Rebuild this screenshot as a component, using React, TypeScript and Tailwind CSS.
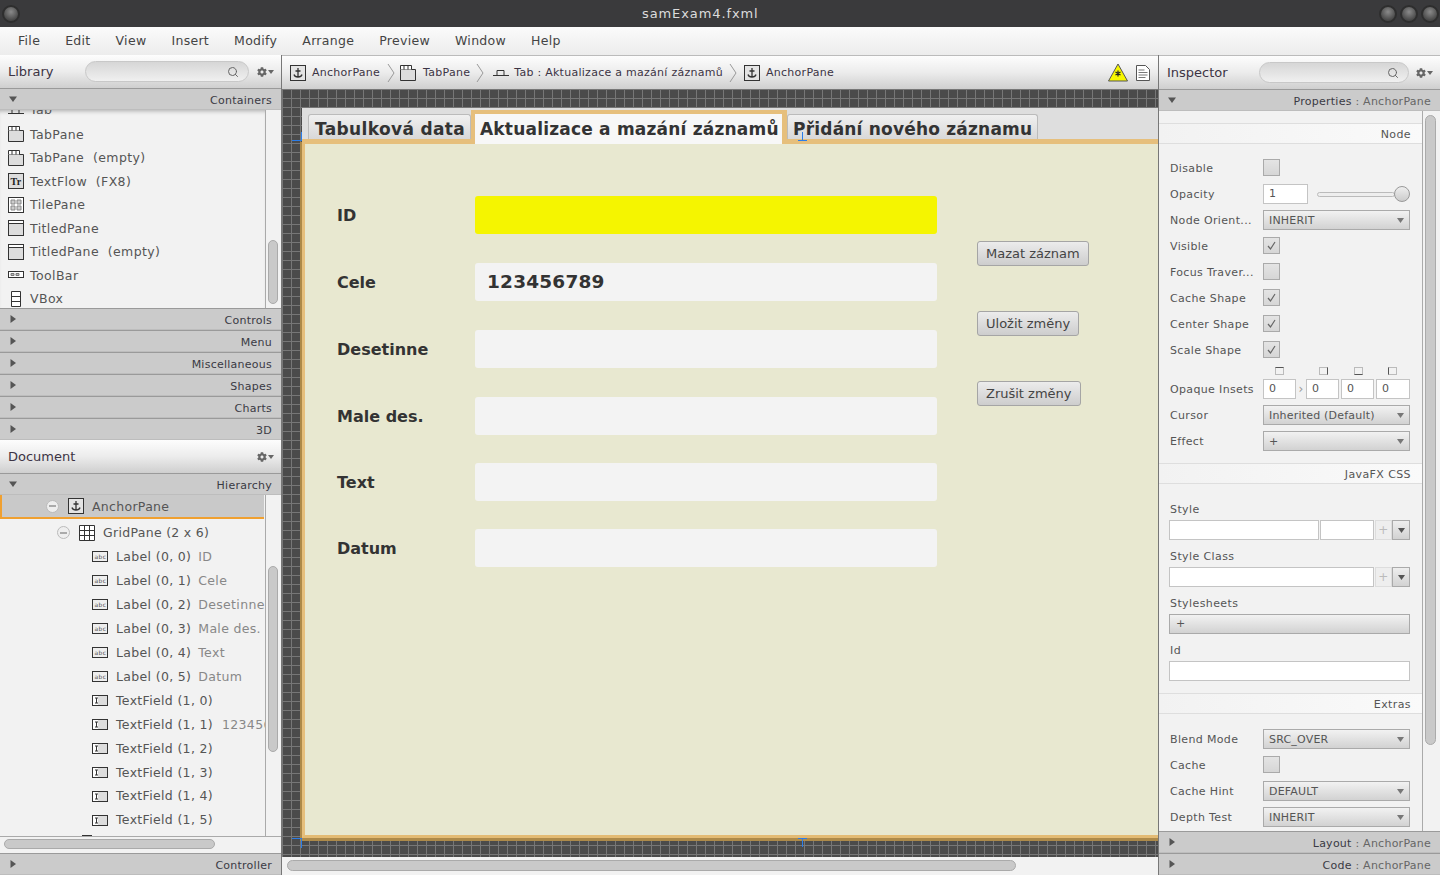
import type { ReactNode } from "react";
import { Search } from "lucide-react";
import { FaCog } from "react-icons/fa";

const menus = ["File", "Edit", "View", "Insert", "Modify", "Arrange", "Preview", "Window", "Help"];

function Box({ children, w = 16, h = 16 }: { children: ReactNode; w?: number; h?: number }) {
  return (
    <svg width={w} height={h} viewBox={`0 0 ${w} ${h}`} className="shrink-0" fill="none" stroke="#333">
      {children}
    </svg>
  );
}

const AnchorIcon = () => (
  <Box>
    <rect x="0.5" y="0.5" width="15" height="15" fill="#e4e4e4" />
    <path d="M8 3v9M5.5 6h5M4 9.5c.5 2 2 2.500 4 2.500s3.500-.5 4-2.500" strokeWidth="1.300" />
  </Box>
);
const TabPaneIcon = () => (
  <Box>
    <path d="M.5 4.500h15v11H.5z" fill="#ddd" />
    <path d="M.5 4.500V.5h11v4M4 .5v4M8 .5v4" fill="#fff" />
  </Box>
);
const TextFlowIcon = () => (
  <Box>
    <rect x="0.5" y="0.5" width="15" height="15" fill="#ddd" />
    <text x="2.500" y="12" fontSize="10" fontFamily="Liberation Serif" fill="#222" stroke="none" fontWeight="bold">
      Tr
    </text>
  </Box>
);
const TilePaneIcon = () => (
  <Box>
    <rect x="0.5" y="0.5" width="15" height="15" fill="#fff" />
    <path d="M3 3h4v4H3zM9 3h4v4H9zM3 9h4v4H3zM9 9h4v4H9z" fill="#ccc" stroke="#888" />
  </Box>
);
const TitledIcon = () => (
  <Box>
    <rect x="0.5" y="0.5" width="15" height="15" fill="#ddd" />
    <path d="M.5 3.500h15" />
    <path d="M1 1h14v2H1z" fill="#fff" stroke="none" />
  </Box>
);
const ToolBarIcon = () => (
  <Box>
    <rect x="0.5" y="4.500" width="15" height="6" fill="#fff" />
    <path d="M3 6.500h3v2H3zM8 6.500h3v2H8z" fill="#bbb" stroke="#777" />
  </Box>
);
const VBoxIcon = () => (
  <Box>
    <path d="M3.500.5h9v15h-9zM3.500 5.500h9M3.500 10.500h9" fill="#fff" />
  </Box>
);
const GridIcon = () => (
  <Box>
    <path d="M.5.5h15v15H.5zM5.500.5v15M10.500.5v15M.5 5.500h15M.5 10.500h15" fill="#fff" />
  </Box>
);
const LabelIcon = () => (
  <Box h={11}>
    <rect x="0.500" y="0.500" width="15" height="10" fill="#eee" />
    <text x="2.500" y="7.500" fontSize="6" fontFamily="DejaVu Sans" fill="#555" stroke="none">
      abc
    </text>
  </Box>
);
const FieldIcon = () => (
  <Box h={11}>
    <rect x="0.500" y="0.500" width="15" height="10" fill="#ddd" />
    <path d="M1 1h5v9H1z" fill="#fff" stroke="none" />
    <path d="M3 3h3M4.500 3v5M3 8h3" />
  </Box>
);
const HatIcon = () => (
  <svg width="16" height="8" viewBox="0 0 16 8" fill="none" stroke="#333" className="shrink-0">
    <path d="M0 6.500h16M4 6.500V1.500h7v5" />
  </svg>
);

function Triangle({ open }: { open?: boolean }) {
  return (
    <svg width="8" height="8" viewBox="0 0 8 8" className="shrink-0">
      {open ? <path d="M0 1.500h8L4 7z" fill="#555" /> : <path d="M1.500 0v8L7 4z" fill="#555" />}
    </svg>
  );
}

function SectionBar({ open, title, sub }: { open?: boolean; title: string; sub?: string }) {
  return (
    <div className="h-[22px] shrink-0 flex items-center justify-between pl-[9px] pr-[9px] bg-[#cbcbcb] border-t border-t-[#9a9a9a] border-b border-b-[#bdbdbd] text-[11px] tracking-[0.25px] text-[#3a3a44]">
      <Triangle open={open} />
      <span className="pt-[4px]">
        {title}
        {sub && <span className="text-[#666]"> : {sub}</span>}
      </span>
    </div>
  );
}

function SearchBox({ w }: { w: string }) {
  return (
    <div className={`${w} h-[21px] rounded-full border border-[#c8c8c8] bg-gradient-to-b from-[#d6d6d6] to-[#f0f0f0] flex items-center justify-end pr-[9px]`}>
      <Search size={12} color="#666" strokeWidth={2} />
    </div>
  );
}

function Gear() {
  return (
    <div className="flex items-center gap-[1px] text-[#666]">
      <FaCog size={10} />
      <svg width="6" height="4" viewBox="0 0 6 4">
        <path d="M0 0h6L3 4z" fill="#666" />
      </svg>
    </div>
  );
}

function PanelHeader({ title, children }: { title: string; children: ReactNode }) {
  return (
    <div className="h-[33px] shrink-0 flex items-center justify-between pl-[8px] pr-[7px] bg-gradient-to-b from-[#fdfdfd] via-[#ececec] to-[#cfcfcf] text-[13px] text-[#3c3444]">
      <span className="pt-[1px]">{title}</span>
      {children}
    </div>
  );
}

function Scrollbar({ top, height }: { top: string; height: string }) {
  return (
    <div className="w-[16px] shrink-0 border-l border-l-[#aaa] pl-[2px]">
      <div className={`${top} ${height} w-[10px] rounded-full bg-[#c9c9c9] border border-[#aaa]`} />
    </div>
  );
}

const libraryItems: [ReactNode, string][] = [
  [<TabPaneIcon />, "TabPane"],
  [<TabPaneIcon />, "TabPane  (empty)"],
  [<TextFlowIcon />, "TextFlow  (FX8)"],
  [<TilePaneIcon />, "TilePane"],
  [<TitledIcon />, "TitledPane"],
  [<TitledIcon />, "TitledPane  (empty)"],
  [<ToolBarIcon />, "ToolBar"],
  [<VBoxIcon />, "VBox"],
];

const treeItems: [string, string, boolean][] = [
  ["Label (0, 0)", "ID", true],
  ["Label (0, 1)", "Cele", true],
  ["Label (0, 2)", "Desetinne", true],
  ["Label (0, 3)", "Male des.", true],
  ["Label (0, 4)", "Text", true],
  ["Label (0, 5)", "Datum", true],
  ["TextField (1, 0)", "", false],
  ["TextField (1, 1)", "123456789", false],
  ["TextField (1, 2)", "", false],
  ["TextField (1, 3)", "", false],
  ["TextField (1, 4)", "", false],
  ["TextField (1, 5)", "", false],
];

function Minus() {
  return (
    <div className="w-[13px] h-[13px] shrink-0 rounded-full border border-[#bbb] bg-[#eee] flex items-center justify-center">
      <div className="w-[7px] h-[2px] bg-[#aaa]" />
    </div>
  );
}

function LeftPanel() {
  return (
    <div className="w-[282px] shrink-0 flex flex-col bg-[#f2f2f2] border-r border-r-[#777]">
      <div className="h-[1px] bg-[#bbb]" />
      <PanelHeader title="Library">
        <div className="flex items-center gap-[8px]">
          <SearchBox w="w-[164px]" />
          <Gear />
        </div>
      </PanelHeader>
      <SectionBar open title="Containers" />
      <div className="h-[198px] shrink-0 flex overflow-hidden">
        <div className="w-[265px] overflow-hidden pt-[12px] shadow-[inset_0_4px_4px_-3px_#aaa]">
          <div className="-mt-[23px] h-[23.5px] pl-[8px] flex items-center gap-[6px] text-[12.500px] tracking-[0.4px] text-[#555]">
            <HatIcon />
            <span>Tab</span>
          </div>
          {libraryItems.map(([icon, name]) => (
            <div key={name} className="h-[23.5px] pl-[8px] flex items-center gap-[6px] text-[12.500px] tracking-[0.4px] text-[#555] whitespace-pre">
              {icon}
              <span className="pt-[2px]">{name}</span>
            </div>
          ))}
        </div>
        <Scrollbar top="mt-[130px]" height="h-[64px]" />
      </div>
      {["Controls", "Menu", "Miscellaneous", "Shapes", "Charts", "3D"].map((t) => (
        <SectionBar key={t} title={t} />
      ))}
      <PanelHeader title="Document">
        <Gear />
      </PanelHeader>
      <SectionBar open title="Hierarchy" />
      <div className="h-[342px] shrink-0 flex overflow-hidden border-b border-b-[#aaa]">
        <div className="w-[265px] overflow-hidden">
          <div className="w-[264px] h-[24px] pl-[44px] bg-[#c9c9c9] border-l-2 border-l-[#f0a030] border-b-2 border-b-[#f0a030] flex items-center text-[12.500px] tracking-[0.3px] text-[#555]">
            <Minus />
            <div className="ml-[9px]">
              <AnchorIcon />
            </div>
            <span className="ml-[8px] pt-[3px]">AnchorPane</span>
          </div>
          <div className="h-[25px] mt-[1px] pl-[57px] flex items-center text-[12.500px] tracking-[0.3px] text-[#555]">
            <Minus />
            <div className="ml-[9px]">
              <GridIcon />
            </div>
            <span className="ml-[8px] pt-[1px]">GridPane (2 x 6)</span>
          </div>
          {treeItems.map(([name, value, isLabel]) => (
            <div key={name} className="h-[23.950px] pl-[92px] flex items-center gap-[7px] text-[12.500px] tracking-[0.33px] text-[#555] whitespace-nowrap">
              <div className="mr-[1px]">{isLabel ? <LabelIcon /> : <FieldIcon />}</div>
              <span className="pt-[1px]">{name}</span>
              <span className={`pt-[1px] text-[#888] ${isLabel ? "" : "ml-[2px]"}`}>{value}</span>
            </div>
          ))}
          <div className="ml-[82px] mt-[3px] w-[10px] h-[1px] bg-[#333]" />
        </div>
        <Scrollbar top="mt-[71px]" height="h-[186px]" />
      </div>
      <div className="h-[16px] shrink-0 pl-[4px] pt-[2px] flex">
        <div className="w-[211px] h-[10px] rounded-full bg-[#c9c9c9] border border-[#aaa]" />
      </div>
      <SectionBar title="Controller" />
    </div>
  );
}

function Chevron() {
  return (
    <svg width="9" height="20" viewBox="0 0 9 20" fill="none" stroke="#999" className="shrink-0">
      <path d="M1 1l6 9-6 9" />
    </svg>
  );
}

function Breadcrumb() {
  return (
    <div className="h-[33px] shrink-0 flex items-center pl-[8px] pr-[8px] bg-gradient-to-b from-[#fdfdfd] via-[#ececec] to-[#cfcfcf] text-[11px] tracking-[0.27px] text-[#3c3444] whitespace-nowrap">
      <AnchorIcon />
      <span className="ml-[6px] pt-[2px]">AnchorPane</span>
      <div className="ml-[7px]">
        <Chevron />
      </div>
      <div className="ml-[4px]">
        <TabPaneIcon />
      </div>
      <span className="ml-[7px] pt-[2px]">TabPane</span>
      <div className="ml-[6px]">
        <Chevron />
      </div>
      <div className="ml-[8px]">
        <HatIcon />
      </div>
      <span className="ml-[5px] pt-[2px]">Tab : Aktualizace a mazání záznamů</span>
      <div className="ml-[6px]">
        <Chevron />
      </div>
      <div className="ml-[6px]">
        <AnchorIcon />
      </div>
      <span className="ml-[6px] pt-[2px]">AnchorPane</span>
      <div className="flex-1" />
      <svg width="20" height="19" viewBox="0 0 20 19" className="shrink-0">
        <path d="M10 1l9.500 17H.5z" fill="#f7f700" stroke="#555" />
        <path d="M10 7.500v6M7.500 9l5 3M12.500 9l-5 3" stroke="#222" strokeWidth="1.200" />
      </svg>
      <svg width="14" height="16" viewBox="0 0 14 16" fill="none" stroke="#555" className="ml-[8px] shrink-0">
        <path d="M.5.5h9l4 4v11H.5z" fill="#fff" />
        <path d="M2.500 5h6M2.500 7.500h9M2.500 10h9M2.500 12.500h7" stroke="#777" />
      </svg>
    </div>
  );
}

const fields: [string, string, string, string][] = [
  ["ID", "", "bg-[#f5f500]", ""],
  ["Cele", "123456789", "bg-[#f3f3f3]", ""],
  ["Desetinne", "", "bg-[#f3f3f3]", ""],
  ["Male des.", "", "bg-[#f3f3f3]", ""],
  ["Text", "", "bg-[#f3f3f3]", "-mt-[1px]"],
  ["Datum", "", "bg-[#f3f3f3]", "-mt-[1px]"],
];

function FxButton({ children }: { children: ReactNode }) {
  return (
    <div className="h-[25px] w-fit px-[8px] flex items-center rounded-[3px] border border-[#a5a5a5] bg-gradient-to-b from-[#ececec] to-[#cdcdcd] text-[13px] text-[#444] whitespace-nowrap">
      {children}
    </div>
  );
}

function Canvas() {
  return (
    <div className="flex-1 min-h-0 overflow-hidden pl-[20px] pt-[19px] bg-[#4b4b4b] bg-[linear-gradient(#777_1px,transparent_1px),linear-gradient(90deg,#777_1px,transparent_1px)] bg-[size:9px_9px]">
      <div className="w-[900px] h-[730px] bg-[#dedede] relative flex flex-col">
        <div className="h-[31px] shrink-0 flex items-end pl-[6px] text-[17px] leading-[22px] font-bold text-[#333] whitespace-nowrap">
          <div className="h-[25px] w-[163px] pl-[6px] pt-[3px] tracking-[0.35px] rounded-t-[3px] border border-b-0 border-[#bbb] bg-gradient-to-b from-[#f0f0f0] to-[#d8d8d8]">Tabulková data</div>
          <div className="relative z-10 h-[34px] w-[316px] -mb-[5px] pl-[5px] pr-[1px] pt-[4px] tracking-[0.2px] border-[4px] border-r-[5px] border-b-0 border-[#e6bf7c] bg-[#f7f7f7]">
            <span>Aktualizace a mazání záznamů</span>
          </div>
          <div className="h-[25px] w-[251px] pl-[5px] pt-[3px] tracking-[0.2px] rounded-t-[3px] border border-b-0 border-[#bbb] bg-gradient-to-b from-[#f0f0f0] to-[#d8d8d8]">Přidání nového záznamu</div>
        </div>
        <div className="h-[699px] shrink-0 border-t-[5px] border-l-[3px] border-b-[3px] border-t-[#e6bf7c] border-l-[#e6bf7c] border-b-[#e3bb74] shadow-[-2px_3px_0_#ad8a4a] bg-[#e8e8d0] pl-[32px] pt-[52px] flex">
          <div className="w-[600px] flex flex-col gap-[29px] shrink-0">
            {fields.map(([label, value, bg, nudge]) => (
              <div key={label} className={`flex items-center h-[38px] ${nudge}`}>
                <div className="w-[138px] shrink-0 pt-[2px] text-[16px] font-bold text-[#333]">{label}</div>
                <div className={`w-[462px] h-[38px] rounded-[3px] ${bg} pl-[12px] flex items-center text-[18.500px] font-bold tracking-[0.2px] text-[#333]`}>{value}</div>
              </div>
            ))}
          </div>
          <div className="ml-[40px] pt-[45px] flex flex-col gap-[45px]">
            <FxButton>Mazat záznam</FxButton>
            <FxButton>Uložit změny</FxButton>
            <FxButton>Zrušit změny</FxButton>
          </div>
        </div>
        {/* blue resize handles */}
        <div className="absolute z-20 left-[-10px] top-[32px] w-[10px] h-[1px] bg-[#2b7de9]" />
        <div className="absolute z-20 left-[-1px] top-[24px] w-[1px] h-[8px] bg-[#2b7de9]" />
        <div className="absolute z-20 left-[500px] top-[24px] w-[1px] h-[8px] bg-[#2b7de9]" />
        <div className="absolute z-20 left-[496px] top-[32px] w-[9px] h-[1px] bg-[#2b7de9]" />
        <div className="absolute z-20 left-[-10px] top-[730px] w-[10px] h-[1px] bg-[#2b7de9]" />
        <div className="absolute z-20 left-[-1px] top-[730px] w-[1px] h-[10px] bg-[#2b7de9]" />
        <div className="absolute z-20 left-[496px] top-[730px] w-[9px] h-[1px] bg-[#2b7de9]" />
        <div className="absolute z-20 left-[500px] top-[730px] w-[1px] h-[9px] bg-[#2b7de9]" />
      </div>
    </div>
  );
}

function Heading({ children }: { children: ReactNode }) {
  return (
    <div className="h-[21px] shrink-0 flex items-center justify-end pr-[11px] pt-[4px] border-y border-y-[#dedede] bg-gradient-to-r from-[#f2f2f2] to-[#fafafa] text-[11px] tracking-[0.4px] text-[#555]">
      {children}
    </div>
  );
}

function Row({ label, children }: { label: string; children?: ReactNode }) {
  return (
    <div className="h-[26px] pl-[11px] pr-[12px] flex items-center text-[11px] tracking-[0.35px] text-[#555] whitespace-nowrap">
      <div className="w-[93px] shrink-0 pt-[3px]">{label}</div>
      {children}
    </div>
  );
}

function Check({ on }: { on?: boolean }) {
  return (
    <div className="w-[17px] h-[17px] -mt-[1px] flex items-center justify-center border border-[#aaa] bg-gradient-to-b from-[#e4e4e4] to-[#d6d6d6]">
      {on && (
        <svg width="9" height="9" viewBox="0 0 9 9" fill="none" stroke="#666" strokeWidth="1.200">
          <path d="M1 5l2.500 3L8 1" />
        </svg>
      )}
    </div>
  );
}

function Combo({ children }: { children: ReactNode }) {
  return (
    <div className="w-[147px] h-[20px] pl-[5px] pr-[5px] flex items-center justify-between border border-[#aaa] bg-gradient-to-b from-[#f2f2f2] to-[#d2d2d2] text-[11px] tracking-[0.2px] text-[#555]">
      <span className="pt-[3px]">{children}</span>
      <svg width="7" height="5" viewBox="0 0 7 5">
        <path d="M0 0h7L3.500 5z" fill="#777" />
      </svg>
    </div>
  );
}

function Input({ w, children }: { w: string; children?: ReactNode }) {
  return (
    <div className={`${w} h-[20px] shrink-0 pl-[5px] pt-[1px] flex items-center bg-white border border-[#c4c4c4] text-[11px] text-[#555]`}>{children}</div>
  );
}

function AddButtons() {
  return (
    <>
      <div className="ml-[1px] w-[17px] h-[20px] flex items-center justify-center border border-[#ddd] bg-[#eee] text-[12px] text-[#bbb]">+</div>
      <div className="w-[18px] h-[20px] flex items-center justify-center border border-[#aaa] bg-gradient-to-b from-[#eee] to-[#d2d2d2]">
        <svg width="7" height="5" viewBox="0 0 7 5">
          <path d="M0 0h7L3.500 5z" fill="#555" />
        </svg>
      </div>
    </>
  );
}

function InsetMark({ side }: { side: string }) {
  return <div className={`w-[9px] h-[8px] border border-[#bbb] ${side}`} />;
}

function Inspector() {
  return (
    <div className="flex-1 flex flex-col bg-[#f2f2f2] border-l border-l-[#777] min-w-0">
      <div className="h-[1px] bg-[#bbb]" />
      <PanelHeader title="Inspector">
        <div className="flex items-center gap-[7px]">
          <SearchBox w="w-[150px]" />
          <Gear />
        </div>
      </PanelHeader>
      <SectionBar open title="Properties" sub="AnchorPane" />
      <div className="flex-1 min-h-0 flex overflow-hidden">
        <div className="w-[263px] shrink-0 pt-[12px] flex flex-col">
          <Heading>Node</Heading>
          <div className="h-[11px] shrink-0" />
          <Row label="Disable"><Check /></Row>
          <Row label="Opacity">
            <Input w="w-[45px]">1</Input>
            <div className="ml-[9px] w-[78px] h-[5px] rounded-full border border-[#bbb] bg-[#eee]" />
            <div className="-ml-[1px] w-[16px] h-[16px] rounded-full border border-[#999] bg-gradient-to-b from-[#eee] to-[#ccc]" />
          </Row>
          <Row label="Node Orient..."><Combo>INHERIT</Combo></Row>
          <Row label="Visible"><Check on /></Row>
          <Row label="Focus Traver..."><Check /></Row>
          <Row label="Cache Shape"><Check on /></Row>
          <Row label="Center Shape"><Check on /></Row>
          <Row label="Scale Shape"><Check on /></Row>
          <div className="h-[13px] shrink-0 pl-[116px] pt-[4px] flex">
            <InsetMark side="border-t-[#555]" />
            <div className="ml-[35px]"><InsetMark side="border-r-[#555]" /></div>
            <div className="ml-[26px]"><InsetMark side="border-b-[#555]" /></div>
            <div className="ml-[25px]"><InsetMark side="border-l-[#555]" /></div>
          </div>
          <Row label="Opaque Insets">
            <Input w="w-[33px]">0</Input>
            <span className="w-[10px] text-center text-[12px] text-[#999]">›</span>
            <Input w="w-[33px]">0</Input>
            <div className="ml-[2px]"><Input w="w-[33px]">0</Input></div>
            <div className="ml-[2px]"><Input w="w-[34px]">0</Input></div>
          </Row>
          <Row label="Cursor"><Combo>Inherited (Default)</Combo></Row>
          <Row label="Effect"><Combo>+</Combo></Row>
          <div className="h-[9px] shrink-0" />
          <Heading>JavaFX CSS</Heading>
          <div className="pl-[10px] pr-[12px] pt-[16px] flex flex-col text-[11px] tracking-[0.4px] text-[#555]">
            <div className="h-[18px] pl-[1px] pt-[3px] flex items-center">Style</div>
            <div className="mt-[2px] mb-[7px] flex">
              <Input w="w-[150px]" />
              <div className="ml-[1px]"><Input w="w-[54px]" /></div>
              <AddButtons />
            </div>
            <div className="h-[18px] pl-[1px] pt-[3px] flex items-center">Style Class</div>
            <div className="mt-[2px] mb-[7px] flex">
              <Input w="w-[205px]" />
              <AddButtons />
            </div>
            <div className="h-[18px] pl-[1px] pt-[3px] flex items-center">Stylesheets</div>
            <div className="mt-[2px] mb-[7px] h-[20px] pl-[6px] flex items-center border border-[#aaa] bg-gradient-to-b from-[#f2f2f2] to-[#d2d2d2]">+</div>
            <div className="h-[18px] pl-[1px] pt-[3px] flex items-center">Id</div>
            <div className="mt-[2px]"><Input w="w-[241px]" /></div>
          </div>
          <div className="h-[12px] shrink-0" />
          <Heading>Extras</Heading>
          <div className="h-[12px] shrink-0" />
          <Row label="Blend Mode"><Combo>SRC_OVER</Combo></Row>
          <Row label="Cache"><Check /></Row>
          <Row label="Cache Hint"><Combo>DEFAULT</Combo></Row>
          <Row label="Depth Test"><Combo>INHERIT</Combo></Row>
        </div>
        <div className="flex-1 border-l border-l-[#aaa] pl-[2px]">
          <div className="mt-[4px] w-[11px] h-[630px] rounded-full bg-[#c9c9c9] border border-[#aaa]" />
        </div>
      </div>
      <SectionBar title="Layout" sub="AnchorPane" />
      <SectionBar title="Code" sub="AnchorPane" />
    </div>
  );
}

function WinButton() {
  return <div className="w-[18px] h-[18px] rounded-full border-2 border-[#2e2e2e] bg-[radial-gradient(circle_at_50%_35%,#8a8a8a,#4a4a4a_70%)]" />;
}

export default function App() {
  return (
    <div className="w-[1440px] h-[875px] overflow-hidden flex flex-col font-['DejaVu_Sans',sans-serif] bg-[#f2f2f2]">
      <div className="h-[27px] shrink-0 relative flex items-center justify-between pl-[2px] pr-[1px] bg-[#3a3a3c]">
        <WinButton />
        <div className="absolute left-[642px] top-[4px] text-[13px] tracking-[0.9px] text-[#dcdcdc]">samExam4.fxml</div>
        <div className="flex gap-[3px]">
          <WinButton />
          <WinButton />
          <WinButton />
        </div>
      </div>
      <div className="h-[28px] shrink-0 pl-[18px] flex items-center gap-[25px] bg-gradient-to-b from-[#fbfbfb] to-[#ececec] text-[12.500px] tracking-[0.3px] text-[#444]">
        {menus.map((m) => (
          <span key={m}>{m}</span>
        ))}
      </div>
      <div className="flex-1 min-h-0 flex">
        <LeftPanel />
        <div className="w-[876px] shrink-0 flex flex-col">
          <div className="h-[1px] bg-[#bbb]" />
          <Breadcrumb />
          <Canvas />
          <div className="h-[18px] shrink-0 pl-[5px] pt-[3px] bg-[#f2f2f2]">
            <div className="w-[729px] h-[11px] rounded-full bg-[#c9c9c9] border border-[#aaa]" />
          </div>
        </div>
        <Inspector />
      </div>
    </div>
  );
}
